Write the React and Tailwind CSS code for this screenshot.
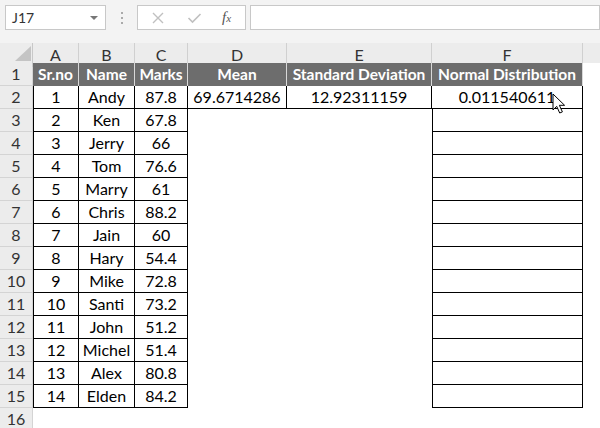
import React from 'react';

const rows = [
  [1, 'Andy', '87.8'],
  [2, 'Ken', '67.8'],
  [3, 'Jerry', '66'],
  [4, 'Tom', '76.6'],
  [5, 'Marry', '61'],
  [6, 'Chris', '88.2'],
  [7, 'Jain', '60'],
  [8, 'Hary', '54.4'],
  [9, 'Mike', '72.8'],
  [10, 'Santi', '73.2'],
  [11, 'John', '51.2'],
  [12, 'Michel', '51.4'],
  [13, 'Alex', '80.8'],
  [14, 'Elden', '84.2'],
];

const headers = ['Sr.no', 'Name', 'Marks', 'Mean', 'Standard Deviation', 'Normal Distribution'];
const letters = ['A', 'B', 'C', 'D', 'E', 'F'];

const gridCols = 'grid grid-cols-[33px_46px_56px_53px_99px_145px_151px_1fr]';

const RowNum = ({ n }) => (
  <div className="h-[23px] flex items-center justify-center bg-[#ececec] border-r border-b border-[#d4d4d4] text-[16px] text-[#333]">
    {n}
  </div>
);

const Cursor = () => (
  <svg className="absolute left-[552px] top-[93px]" width="15" height="22" viewBox="0 0 15 22">
    <path d="M1 1 L1 17 L4.7 13.3 L7.7 20 L10.4 18.9 L7.4 12.3 L12.6 12.3 Z" fill="white" stroke="black" strokeWidth="1" strokeLinejoin="round" />
  </svg>
);

export default function App() {
  return (
    <div className="relative w-[600px] h-[428px] overflow-hidden bg-white font-['Lato',sans-serif] text-black">
      {/* formula bar */}
      <div className="h-[43px] bg-[#f3f3f3] flex items-start pt-[5px] pl-[5px]">
        <div className="w-[101px] h-[25px] bg-white border border-[#c8c8c8] flex items-center justify-between pl-[6px] pr-[7px]">
          <span className="text-[14px] text-[#333]">J17</span>
          <span className="w-0 h-0 border-l-[4px] border-r-[4px] border-t-[4px] border-l-transparent border-r-transparent border-t-[#777]" />
        </div>
        <div className="w-[31px] h-[25px] flex flex-col items-center justify-center gap-[3px]">
          <span className="w-[2px] h-[2px] bg-[#aaa]" />
          <span className="w-[2px] h-[2px] bg-[#aaa]" />
          <span className="w-[2px] h-[2px] bg-[#aaa]" />
        </div>
        <div className="w-[109px] h-[25px] bg-white border border-[#c8c8c8] flex items-center">
          <svg className="ml-[14px]" width="12" height="12" viewBox="0 0 12 12">
            <path d="M1 1 L11 11 M11 1 L1 11" fill="none" stroke="#c0c0c0" strokeWidth="1.4" />
          </svg>
          <svg className="ml-[23px]" width="15" height="12" viewBox="0 0 15 12">
            <path d="M1.5 6 L5.5 10 L13.5 2" fill="none" stroke="#c0c0c0" strokeWidth="1.6" />
          </svg>
          <span className="ml-[20px] font-['Liberation_Serif',serif] italic text-[15px] text-[#555]">
            f<span className="text-[11px]">x</span>
          </span>
        </div>
        <div className="ml-[4px] flex-1 h-[25px] bg-white border border-[#c8c8c8]" />
      </div>

      {/* column letters */}
      <div className={`${gridCols} h-[20px] bg-[#ececec]`}>
        <div className="relative border-r border-[#c8c8c8]">
          <svg className="absolute left-[15px] top-[3px]" width="16" height="15" viewBox="0 0 16 15">
            <path d="M16 0 L16 15 L0 15 Z" fill="#c4c4c4" />
          </svg>
        </div>
        {letters.map((l) => (
          <div key={l} className="flex items-center justify-center border-r border-[#d0d0d0] text-[16px] text-[#333]">
            {l}
          </div>
        ))}
        <div />
      </div>

      {/* row 1 */}
      <div className={gridCols}>
        <RowNum n={1} />
        {headers.map((h) => (
          <div key={h} className="h-[23px] flex items-center justify-center bg-[#6d6d6d] border-r border-[#d8d8d8] text-white font-bold text-[15.5px] whitespace-nowrap">
            {h}
          </div>
        ))}
        <div />
      </div>

      {/* row 2 */}
      <div className={`${gridCols} text-[16px]`}>
        <RowNum n={2} />
        <div className="h-[23px] flex items-center justify-center border-l border-r border-b border-black">1</div>
        <div className="h-[23px] flex items-center justify-center border-r border-b border-black">Andy</div>
        <div className="h-[23px] flex items-center justify-center border-r border-b border-black">87.8</div>
        <div className="h-[23px] flex items-center justify-center border-r border-b border-black">69.6714286</div>
        <div className="h-[23px] flex items-center justify-center border-r border-b border-black">12.92311159</div>
        <div className="h-[23px] flex items-center justify-center border-r border-b border-black">0.011540611</div>
        <div />
      </div>

      {/* rows 3-15 */}
      {rows.slice(1).map(([no, name, mark], i) => (
        <div key={no} className={`${gridCols} text-[16px]`}>
          <RowNum n={i + 3} />
          <div className="h-[23px] flex items-center justify-center border-l border-r border-b border-black">{no}</div>
          <div className="h-[23px] flex items-center justify-center border-r border-b border-black">{name}</div>
          <div className="h-[23px] flex items-center justify-center border-r border-b border-black">{mark}</div>
          <div />
          <div />
          <div className="h-[23px] border-l border-r border-b border-black" />
          <div />
        </div>
      ))}

      {/* row 16 */}
      <div className={gridCols}>
        <RowNum n={16} />
      </div>

      <Cursor />
    </div>
  );
}
